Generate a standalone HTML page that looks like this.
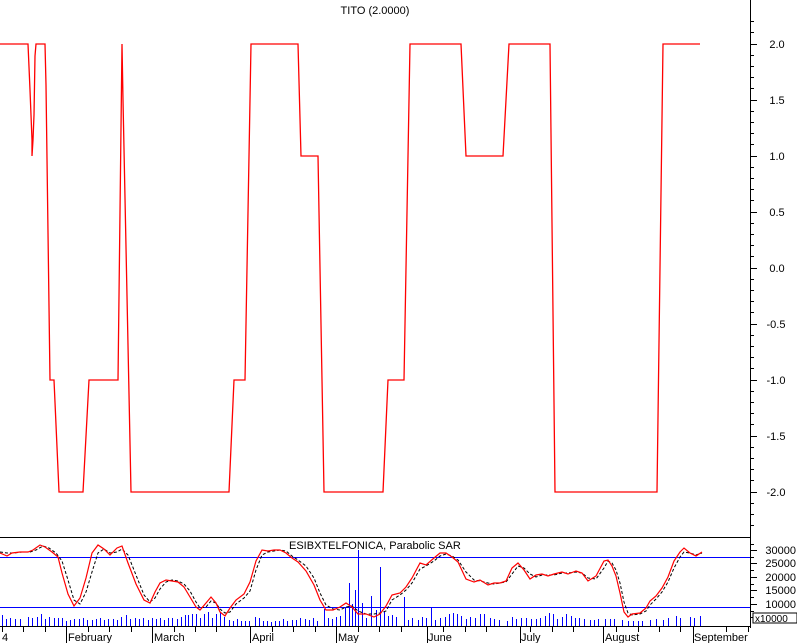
<!DOCTYPE html>
<html><head><meta charset="utf-8"><style>
html,body{margin:0;padding:0;background:#fff;}
svg{display:block;font-family:"Liberation Sans",sans-serif;}
</style></head><body>
<svg width="797" height="643" viewBox="0 0 797 643" xmlns="http://www.w3.org/2000/svg">
<rect width="797" height="643" fill="#fff"/>
<text x="375" y="14" font-size="11" text-anchor="middle">TITO (2.0000)</text>
<line x1="750.5" y1="0" x2="750.5" y2="628" stroke="#000"/>
<g stroke="#000">
<path d="M750 21.5h4M750 32.5h4M750 44.5h7M750 55.5h4M750 66.5h4M750 77.5h4M750 88.5h4M750 100.5h7M750 111.5h4M750 122.5h4M750 133.5h4M750 144.5h4M750 156.5h7M750 167.5h4M750 178.5h4M750 189.5h4M750 200.5h4M750 212.5h7M750 223.5h4M750 234.5h4M750 245.5h4M750 256.5h4M750 268.5h7M750 279.5h4M750 290.5h4M750 301.5h4M750 312.5h4M750 324.5h7M750 335.5h4M750 346.5h4M750 357.5h4M750 368.5h4M750 380.5h7M750 391.5h4M750 402.5h4M750 413.5h4M750 424.5h4M750 436.5h7M750 447.5h4M750 458.5h4M750 469.5h4M750 480.5h4M750 492.5h7M750 503.5h4M750 514.5h4M750 525.5h4"/>
<path d="M750 544.5h4M750 550.5h7M750 557.5h4M750 563.5h7M750 570.5h4M750 577.5h7M750 584.5h4M750 590.5h7M750 597.5h4M750 604.5h7M750 611.5h4M750 617.5h7"/>
</g>
<g font-size="11" text-anchor="middle">
<text x="777" y="48">2.0</text><text x="777" y="104">1.5</text><text x="777" y="160">1.0</text><text x="777" y="216">0.5</text><text x="777" y="272">0.0</text><text x="776" y="328">-0.5</text><text x="776" y="384">-1.0</text><text x="776" y="440">-1.5</text><text x="776" y="496">-2.0</text>
</g>
<g font-size="11" text-anchor="end">
<text x="796" y="554">30000</text><text x="796" y="567">25000</text><text x="796" y="581">20000</text><text x="796" y="594">15000</text><text x="796" y="608">10000</text><text x="796" y="622">5000</text>
</g>
<rect x="753" y="613" width="44" height="10" fill="#fff" stroke="#000"/>
<text x="755" y="622" font-size="10">x10000</text>
<polyline fill="none" stroke="#f00" stroke-width="1.3" points="0,44 28,44 29,67 30,90 31,115 32,140 32,156 33,140 34,115 35,56 36,44 45,44 46,85 50,380 54,380 59,492 83,492 89,380 118,380 122,44 123,100 131,492 229,492 234,380 245,380 251,44 298,44 301,156 318,156 324,492 383,492 388,380 404,380 410,44 461,44 466,156 503,156 509,44 550,44 555,492 657,492 663,44 700,44"/>
<line x1="0" y1="537.5" x2="750" y2="537.5" stroke="#000"/>
<text x="289" y="549" font-size="11">ESIBXTELFONICA, Parabolic SAR</text>
<line x1="0" y1="557.5" x2="750" y2="557.5" stroke="#00f"/>
<line x1="0" y1="607.5" x2="750" y2="607.5" stroke="#00f"/>
<g transform="translate(0.5,0)"><path stroke="#00f" fill="none" shape-rendering="crispEdges" d="M2 626V615M6 626V619M10 626V618M15 626V619M20 626V619M28 626V617M32 626V618M37 626V617M41 626V614M45 626V619M49 626V617M54 626V618M58 626V618M62 626V618M66 626V621M70 626V620M74 626V619M79 626V619M83 626V618M87 626V620M92 626V620M96 626V619M100 626V618M104 626V620M108 626V619M113 626V619M117 626V620M121 626V617M126 626V615M130 626V619M135 626V618M139 626V619M143 626V618M148 626V620M152 626V618M156 626V619M160 626V618M164 626V620M168 626V618M172 626V618M177 626V619M181 626V617M185 626V615M188 626V615M192 626V614M196 626V614M200 626V618M204 626V614M208 626V612M212 626V618M216 626V614M220 626V613M224 626V617M229 626V620M233 626V621M237 626V619M241 626V621M245 626V621M249 626V621M255 626V617M259 626V618M263 626V621M267 626V621M271 626V622M275 626V621M279 626V621M283 626V619M287 626V621M292 626V620M296 626V620M300 626V618M305 626V619M309 626V620M313 626V618M317 626V621M324 626V609M328 626V618M332 626V619M336 626V617M340 626V616M345 626V608M349 626V583M352 626V604M355 626V590M358 626V550M362 626V603M366 626V618M371 626V596M376 626V610M380 626V567M384 626V612M388 626V616M392 626V615M396 626V617M404 626V597M408 626V620M412 626V618M418 626V620M422 626V617M426 626V618M431 626V608M435 626V620M440 626V618M445 626V617M449 626V614M453 626V613M457 626V614M461 626V616M466 626V619M470 626V617M475 626V618M480 626V614M484 626V614M490 626V618M494 626V619M499 626V620M507 626V621M512 626V617M516 626V619M521 626V618M526 626V618M531 626V619M536 626V619M540 626V618M545 626V616M549 626V613M553 626V614M557 626V619M562 626V617M566 626V614M571 626V616M575 626V618M579 626V618M584 626V619M590 626V620M594 626V620M598 626V619M605 626V619M610 626V619M614 626V619M622 626V620M628 626V621M633 626V621M638 626V621M642 626V621M650 626V620M656 626V619M663 626V620M668 626V618M676 626V616M680 626V618M690 626V617M694 626V618M700 626V616"/></g>
<polyline fill="none" stroke="#000" stroke-dasharray="3,2" points="0,552 7,553 14,553 22,552 30,552 36,550 43,546 49,548 56,553 62,561 68,580 74,600 80,604 86,592 92,572 98,553 104,549 110,553 117,552 122,549 128,555 136,575 144,595 150,602 155,598 160,589 166,582 172,580 178,581 184,584 190,591 196,602 200,608 206,607 211,601 216,603 220,609 225,613 230,612 236,604 244,598 250,591 256,570 262,555 268,552 274,551 280,550 286,551 292,556 298,560 306,566 314,578 320,593 326,605 333,609 340,610 346,607 352,606 358,611 366,614 374,614 380,613 386,611 392,600 400,595 406,590 412,583 420,569 426,566 434,561 440,556 446,554 452,556 458,560 466,572 474,580 480,581 488,583 494,584 500,583 506,582 512,574 518,566 524,568 530,574 536,577 542,575 548,575 554,575 562,573 568,573 576,572 582,573 588,578 596,579 604,568 608,561 612,563 616,570 620,583 624,602 628,613 632,615 640,614 646,611 650,605 656,599 662,592 668,582 674,568 680,557 684,552 690,553 696,555 702,553"/>
<polyline fill="none" stroke="#f00" stroke-width="1.2" points="0,553 7,556 12,553 20,552 28,552 33,550 40,545 45,547 52,552 58,557 62,573 68,594 74,606 80,598 86,578 92,553 98,545 104,549 110,555 117,548 122,546 128,563 136,584 144,600 150,603 155,592 160,583 166,580 172,581 178,582 184,587 190,597 196,607 200,610 206,603 211,597 216,603 220,612 225,616 230,608 236,600 244,594 250,582 256,561 262,550 268,551 274,550 280,550 286,553 292,558 298,562 306,571 314,585 320,600 326,610 333,610 340,607 346,603 352,607 358,614 366,614 374,617 380,614 386,606 392,595 400,593 406,587 412,578 420,563 426,565 434,558 440,553 446,553 452,557 458,562 466,579 474,582 480,580 488,585 494,583 500,583 506,581 512,568 518,563 524,570 530,579 536,575 542,574 548,576 554,574 562,572 568,574 576,571 582,573 588,581 596,576 604,561 608,560 612,566 616,576 620,593 624,612 628,617 632,614 640,613 646,608 650,601 656,596 662,588 668,577 674,561 680,552 684,548 690,553 696,556 702,552"/>
<line x1="0" y1="626.5" x2="750" y2="626.5" stroke="#000"/>
<path stroke="#000" d="M2.5 626v6M23.5 626v6M45.5 626v6M66.5 626v17M88.5 626v6M109.5 626v6M131.5 626v6M152.5 626v17M174.5 626v6M195.5 626v6M216.5 626v6M250.5 626v17M272.5 626v6M293.5 626v6M315.5 626v6M336.5 626v17M358.5 626v6M379.5 626v6M401.5 626v6M427.5 626v17M443.5 626v6M465.5 626v6M486.5 626v6M520.5 626v17M530.5 626v6M552.5 626v6M573.5 626v6M603.5 626v17M616.5 626v6M638.5 626v6M659.5 626v6M680.5 626v6M693.5 626v17M726.5 626v6M748.5 626v6"/>
<g font-size="11">
<text x="2" y="641">4</text><text x="68" y="641">February</text><text x="154" y="641">March</text><text x="252" y="641">April</text><text x="338" y="641">May</text><text x="428" y="641">June</text><text x="521" y="641">July</text><text x="605" y="641">August</text><text x="694" y="641">September</text>
</g>
</svg>
</body></html>
